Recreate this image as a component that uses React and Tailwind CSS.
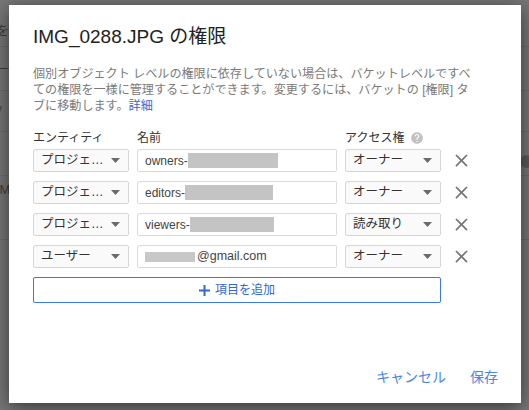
import React from 'react';

const FONT = { fontFamily: '"Liberation Sans", "Noto Sans CJK JP", sans-serif' };

const ROWS = [
  { entity: 'プロジェ…', prefix: 'owners-', mask: 90, access: 'オーナー' },
  { entity: 'プロジェ…', prefix: 'editors-', mask: 88, access: 'オーナー' },
  { entity: 'プロジェ…', prefix: 'viewers-', mask: 84, access: '読み取り' },
  { entity: 'ユーザー', suffix: '@gmail.com', mask: 50, access: 'オーナー' },
];

function Caret() {
  return (
    <svg width="9" height="5" viewBox="0 0 9 5" className="shrink-0">
      <path d="M0 0h9L4.5 5z" fill="#6b6b6b" />
    </svg>
  );
}

function SelectBox({ value }) {
  return (
    <div className="h-[23px] flex items-center justify-between pl-[7px] pr-[8px] bg-[#fafafa] border border-[#d6d6d6] rounded-[2px] text-[12.5px] text-[#333]">
      <span className="whitespace-nowrap">{value}</span>
      <Caret />
    </div>
  );
}

function CloseIcon() {
  return (
    <svg width="21" height="21" viewBox="0 0 24 24" className="ml-[2px]">
      <path
        fill="#757575"
        d="M19 6.41L17.59 5 12 10.59 6.41 5 5 6.41 10.59 12 5 17.59 6.41 19 12 13.41 17.59 19 19 17.59 13.41 12z"
      />
    </svg>
  );
}

function HelpIcon() {
  return (
    <svg width="14" height="14" viewBox="0 0 24 24">
      <path
        fill="#c2c2c2"
        d="M12 2C6.480 2 2 6.48 2 12s4.48 10 10 10 10-4.48 10-10S17.52 2 12 2zm1 17h-2v-2h2v2zm2.07-7.75l-.9.92C13.45 12.9 13 13.5 13 15h-2v-.5c0-1.1.45-2.1 1.17-2.83l1.24-1.26c.37-.36.59-.86.59-1.41 0-1.1-.9-2-2-2s-2 .9-2 2H8c0-2.21 1.790-4 4-4s4 1.79 4 4c0 .88-.36 1.68-.93 2.25z"
      />
    </svg>
  );
}

function NameInput({ row }) {
  const tall = !row.suffix;
  return (
    <div className="h-[23px] flex items-center pl-[7px] bg-white border border-[#d9d9d9] rounded-[2px] text-[12px] text-[#444] overflow-hidden whitespace-nowrap">
      {row.prefix && <span>{row.prefix}</span>}
      <span
        className={tall ? 'h-[15px] bg-[#c4c4c4] shrink-0' : 'h-[10px] bg-[#c8c8c8] shrink-0 mr-[2px]'}
        style={{ width: row.mask }}
      />
      {row.suffix && <span className="text-[12.5px]">{row.suffix}</span>}
    </div>
  );
}

// page behind the modal, only the edges show
function Backdrop() {
  return (
    <div className="absolute inset-0 flex flex-col bg-[#777777] text-[13px] text-[#3d3d3d]">
      <div className="h-[47px] flex items-end pb-[6px] border-b border-[#6c6c6c]">
        <span className="-ml-[4px]">を</span>
      </div>
      <div className="h-[44px] flex items-center border-b border-[#6c6c6c]">
        <span className="-ml-[5px]">一発</span>
      </div>
      <div className="h-[41px] flex items-center border-b border-[#6c6c6c]">
        <span className="-ml-[2px]">/</span>
      </div>
      <div className="h-[44px] flex items-end justify-end pb-[7px] border-b border-[#6c6c6c]">
        <span className="w-[13px] h-[13px] rounded-full bg-[#5a5a5a] -mr-[4px]" />
      </div>
      <div className="h-[64px] flex items-start pt-[4px] border-b border-[#6c6c6c]">
        <span className="-ml-[4px]">IM</span>
      </div>
    </div>
  );
}

export default function App() {
  return (
    <div className="relative w-[529px] h-[410px] overflow-hidden" style={FONT}>
      <Backdrop />
      <div className="absolute left-[9px] top-[5px] w-[512px] h-[398px] bg-white shadow-[0_4px_18px_rgba(0,0,0,0.55)] flex flex-col pl-[24px] pr-[24px]">
        <h1 className="pt-[18px] text-[19px] leading-[28px] text-[#212121]">IMG_0288.JPG の権限</h1>

        <p className="mt-[15px] text-[12.1px] leading-[16px] text-[#7a7a7a] whitespace-nowrap">
          個別オブジェクト レベルの権限に依存していない場合は、バケットレベルですべ
          <br />
          ての権限を一様に管理することができます。変更するには、バケットの [権限] タ
          <br />
          ブに移動します。<span className="text-[#3367d6]">詳細</span>
        </p>

        <div className="mt-[16px] grid grid-cols-[96px_200px_96px_auto] gap-x-[8px] gap-y-[9px] items-center">
          <div className="text-[12px] leading-[16px] text-[#333] -mb-[6px]">エンティティ</div>
          <div className="text-[12px] leading-[16px] text-[#333] -mb-[6px]">名前</div>
          <div className="flex items-center gap-[6px] text-[12px] leading-[16px] text-[#333] -mb-[6px]">
            アクセス権 <HelpIcon />
          </div>
          <div />
          {ROWS.map((row, i) => (
            <React.Fragment key={i}>
              <SelectBox value={row.entity} />
              <NameInput row={row} />
              <SelectBox value={row.access} />
              <CloseIcon />
            </React.Fragment>
          ))}
        </div>

        <button className="mt-[9px] w-[408px] h-[26px] flex items-center justify-center gap-[5px] border border-[#3b78e7] rounded-[2px] text-[12px] text-[#3367d6]">
          <svg width="11" height="11" viewBox="0 0 11 11">
            <path d="M4.5 0h2v4.5H11v2H6.5V11h-2V6.5H0v-2h4.5z" fill="#3367d6" />
          </svg>
          項目を追加
        </button>

        <div className="mt-auto pb-[16px] flex justify-end items-center gap-[24px] text-[14px] leading-[20px] text-[#4a86e8] -mr-[1px]">
          <button>キャンセル</button>
          <button>保存</button>
        </div>
      </div>
    </div>
  );
}
